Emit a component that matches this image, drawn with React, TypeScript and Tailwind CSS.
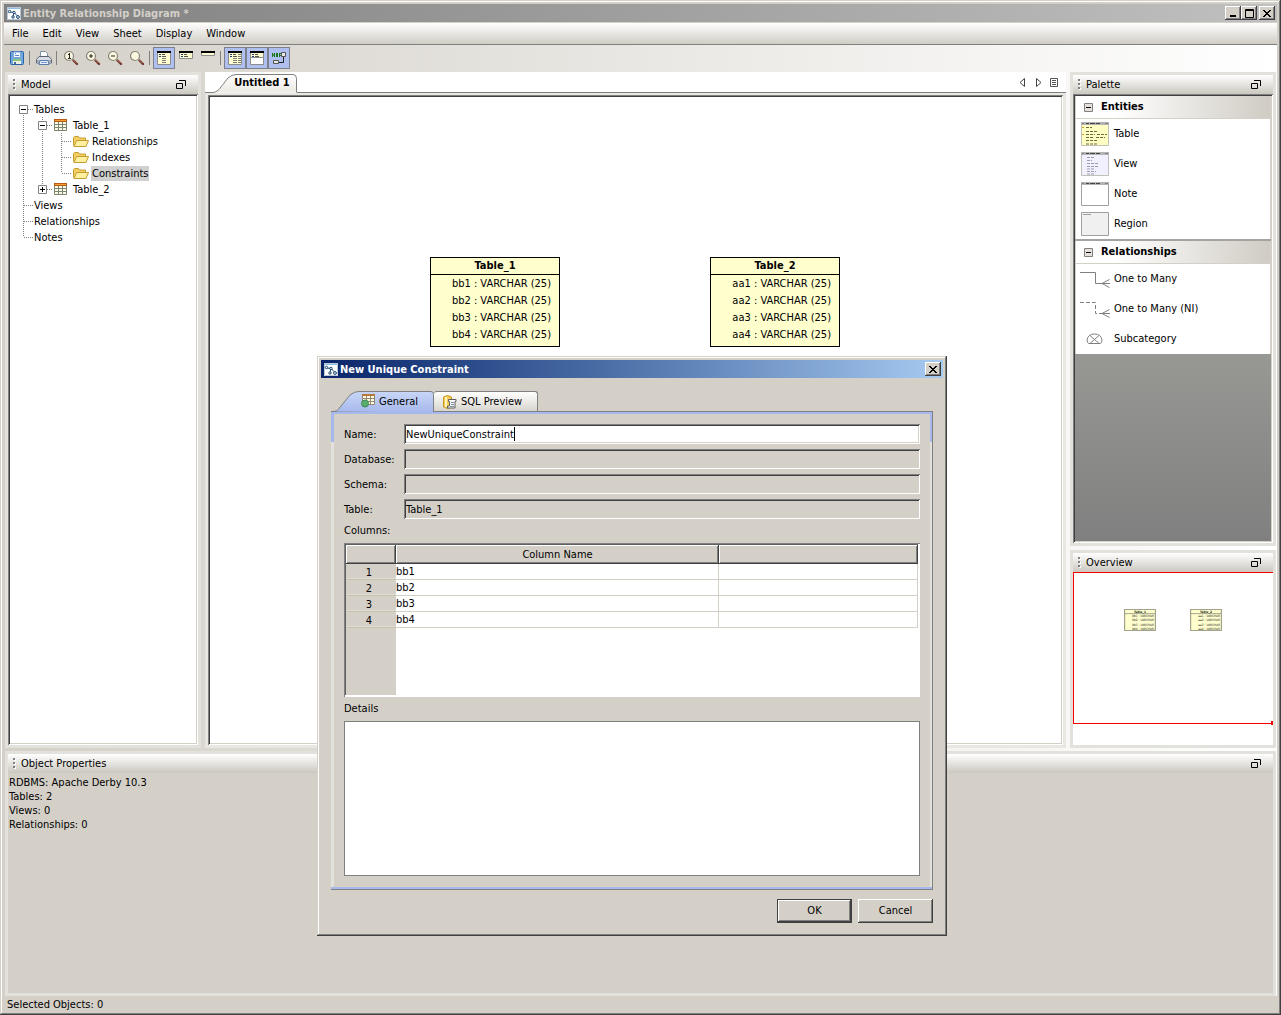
import { clsx } from 'clsx'
import type { ReactNode } from 'react'

type IconProps = { className?: string }

const AppIcon = () => (
  <svg width="14" height="13" viewBox="0 0 14 13" className="shrink-0" aria-hidden="true">
    <path fill="#fff" d="M0 0h14v13H0z" />
    <path fill="#8cc0e8" d="M0 0h14v2H0z" />
    <path fill="none" stroke="#b8c8d8" d="M.5.500h13v12H.5z" />
    <path stroke="#18487c" fill="none" d="M3 5l4 0.500M7 5.500L6 10M7 5.500l4 4" />
    <g fill="#fff" stroke="#12406c">
      <circle cx="2.500" cy="4.500" r="1.200" />
      <circle cx="7" cy="5.500" r="1.200" />
      <circle cx="6" cy="10" r="1.200" />
      <circle cx="11" cy="10" r="1.400" />
    </g>
  </svg>
)

const SaveIcon = () => (
  <svg width="16" height="16" viewBox="0 0 16 16" aria-hidden="true">
    <path fill="#6fa8e0" stroke="#2d62a8" d="M1.500 2.500q0-1 1-1h11q1 0 1 1v11q0 1-1 1h-11q-1 0-1-1z" />
    <path fill="#f8fbff" stroke="#7aa4d4" d="M4.500 2h7v5.500h-7z" />
    <path fill="#4d82c4" d="M6 3h1v1H6zM6 5h4v1H6z" />
    <path fill="#e8f4e0" d="M4 10h8v4H4z" />
    <path fill="#8cc47c" d="M4 9h8v2H4z" />
    <path fill="#4a6c94" d="M5 12h2v2H5z" />
  </svg>
)

const PrintIcon = () => (
  <svg width="16" height="16" viewBox="0 0 16 16" aria-hidden="true">
    <path fill="#fff" stroke="#8094a8" d="M4.500 7V1.500h5l2 2V7" />
    <path fill="#d8dce4" stroke="#5c6470" d="M3 6.500h10l2.500 3v3.500h-15V9.500z" />
    <path fill="#a4acb8" d="M1 10h14v3H1z" />
    <path fill="#e8f2ff" stroke="#5c7ca8" d="M4 10.500h8l1 4H3z" />
    <path fill="#7098d0" d="M5 12h6v1H5z" />
  </svg>
)

const ZoomIcon = ({ sign }: { sign?: 'one' | 'plus' | 'minus' }) => (
  <svg width="16" height="16" viewBox="0 0 16 16" aria-hidden="true">
    <path stroke="#70382c" strokeWidth="2.400" strokeLinecap="round" d="M10.500 10.500l3.500 3.500" />
    <path stroke="#b87868" d="M10 9.500l3.500 3.500" />
    <circle cx="6" cy="6" r="4.500" fill="#fbf6dc" stroke="#84847c" strokeWidth="1.200" />
    {sign === 'one' && <path fill="#222" d="M6 3h1v5H6V5H5V4h1zM5 8h3v1H5z" />}
    {sign === 'plus' && <path fill="#222" d="M5.500 4h1v1.500H8v1H6.500V8h-1V6.500H4v-1h1.500z" />}
    {sign === 'minus' && <path fill="#222" d="M4 5.500h4v1H4z" />}
  </svg>
)

/* Entity display modes of the diagram */
const EntityIcon = ({ mode }: { mode: 'full' | 'keys' | 'title' | 'types' | 'split' }) => {
  const height = { full: 13, keys: 7, title: 4, types: 13, split: 13 }[mode]
  return (
    <svg width="16" height="16" viewBox="0 0 16 16" aria-hidden="true">
      <path fill="#fffbd0" stroke="#8c8c8c" d={`M1.500 1.500h13v${height}h-13z`} />
      <path fill="#000" d="M1 1h14v2H1z" />
      {mode === 'split' && <path fill="#fff" stroke="#8c8c8c" d="M1.500 7.500h13v7h-13z" />}
      {mode !== 'title' && (
        <>
          <path stroke="#1c3c80" d="M3 4.500h2M3 6.500h2" />
          <path stroke="#55554c" d="M6 4.500h3M6 6.500h4" />
        </>
      )}
      {(mode === 'full' || mode === 'types') && (
        <path stroke="#7c7c70" d="M6 8.500h4M6 10.500h4M6 12.500h4" />
      )}
      {mode === 'types' && (
        <path stroke="#7c7c70" d="M11 4.500h3M11 6.500h3M11 8.500h3M11 10.500h3M11 12.500h3" />
      )}
    </svg>
  )
}

const RelationNameIcon = () => (
  <svg width="16" height="16" viewBox="0 0 16 16" aria-hidden="true">
    <path stroke="#222" fill="none" d="M6 12.500h6.500V6" />
    <path fill="#e8e8e8" stroke="#555" d="M10.500 2.500h4v4h-4zM2.500 10.500h5v3h-5z" />
    <path
      stroke="#187818"
      fill="none"
      d="M1.500 7V3M1.500 3.500l2 3M3.500 7V3M5.500 7V4M5 3.500h2M6.500 4v3M5 5.500h2M8.500 7V3M8.500 3.500h1.500M8.500 5.500h1.500"
    />
  </svg>
)

const FloatIcon = () => (
  <svg width="10" height="9" viewBox="0 0 10 9" aria-hidden="true">
    <path fill="none" stroke="#000" d="M3 .5h6.500V6M.5 3.500h6v5h-6z" />
  </svg>
)

const GripIcon = () => (
  <svg width="4" height="12" viewBox="0 0 4 12" aria-hidden="true">
    <path fill="#fff" d="M1 1h2v2H1zM1 5h2v2H1zM1 9h2v2H1z" />
    <path fill="#808080" d="M0 0h2v2H0zM0 4h2v2H0zM0 8h2v2H0z" />
  </svg>
)

const TableIcon = () => (
  <svg width="13" height="12" viewBox="0 0 13 12" className="shrink-0" aria-hidden="true">
    <path fill="#fbf8e4" d="M0 2h13v10H0z" />
    <path fill="#b85a18" d="M0 0h13v3H0z" />
    <path fill="#f0a030" d="M1 1h11v1H1z" />
    <path fill="none" stroke="#7c8474" d="M.5 3v8.500h12V3M4.500 3v8M8.500 3v8M1 5.500h11M1 8.500h11" />
  </svg>
)

const FolderIcon = () => (
  <svg width="16" height="11" viewBox="0 0 16 11" className="shrink-0" aria-hidden="true">
    <path fill="#f4d060" stroke="#c49c30" d="M.5 9.500V1.500l1-1h4l1 1.500h6v2.500" />
    <path fill="#fdf0a0" stroke="#c49c30" d="M1 10.500l2.500-6h12l-2.500 6z" />
  </svg>
)

const CloseGlyph = () => (
  <svg width="8" height="7" viewBox="0 0 8 7" aria-hidden="true">
    <path
      fill="#000"
      d="M0 0h2v1h1v1h2V1h1V0h2v1H7v1H6v1H5v1h1v1h1v1h1v1H6V6H5V5H3v1H2v1H0V6h1V5h1V4h1V3H2V2H1V1H0z"
    />
  </svg>
)

const raised =
  'bg-[#d4d0c8] shadow-[inset_-1px_-1px_#404040,inset_1px_1px_#fff,inset_-2px_-2px_#808080]'
const sunken =
  'shadow-[inset_1px_1px_#808080,inset_-1px_-1px_#fff,inset_2px_2px_#404040,inset_-2px_-2px_#d4d0c8]'

const CaptionButton = ({ label, children }: { label: string; children: ReactNode }) => (
  <button
    type="button"
    aria-label={label}
    className={clsx('flex h-[14px] w-4 items-center justify-center', raised)}
  >
    {children}
  </button>
)

const PanelHeader = ({ title }: { title: string }) => (
  <header className="flex h-[19px] shrink-0 items-center bg-linear-to-b from-white to-[#cbc8c0] pr-3 pl-[5px]">
    <GripIcon />
    <h2 className="ml-1 flex-1">{title}</h2>
    <button type="button" aria-label={`Float ${title}`}>
      <FloatIcon />
    </button>
  </header>
)

const Panel = ({
  title,
  className,
  children,
}: {
  title: string
  className?: string
  children: ReactNode
}) => (
  <section className={clsx('flex flex-col border-3 border-[#e2e1db]', className)}>
    <PanelHeader title={title} />
    {children}
  </section>
)

const menus = ['File', 'Edit', 'View', 'Sheet', 'Display', 'Window']

const toolGroups: { label: string; icon: ReactNode; pressed?: boolean }[][] = [
  [{ label: 'Save', icon: <SaveIcon /> }],
  [{ label: 'Print', icon: <PrintIcon /> }],
  [
    { label: 'Actual size', icon: <ZoomIcon sign="one" /> },
    { label: 'Zoom in', icon: <ZoomIcon sign="plus" /> },
    { label: 'Zoom out', icon: <ZoomIcon sign="minus" /> },
    { label: 'Zoom', icon: <ZoomIcon /> },
  ],
  [
    { label: 'Show all columns', icon: <EntityIcon mode="full" />, pressed: true },
    { label: 'Show keys', icon: <EntityIcon mode="keys" /> },
    { label: 'Show names', icon: <EntityIcon mode="title" /> },
  ],
  [
    { label: 'Show data types', icon: <EntityIcon mode="types" />, pressed: true },
    { label: 'Show key section', icon: <EntityIcon mode="split" />, pressed: true },
    { label: 'Show relationship names', icon: <RelationNameIcon />, pressed: true },
  ],
]

const Toolbar = () => (
  <div role="toolbar" className="flex h-[27px] shrink-0 items-start pt-[2px] pl-[2px]">
    {toolGroups.map((group, i) => (
      <div key={i} className="flex items-center">
        {i > 0 && <span className="mr-[3px] ml-px h-[14px] w-px bg-[#808080]" />}
        {group.map((tool) => (
          <button
            key={tool.label}
            type="button"
            aria-label={tool.label}
            aria-pressed={tool.pressed}
            className={clsx(
              'flex size-[22px] items-center justify-center border',
              tool.pressed ? 'border-[#7c7f8c] bg-[#afc0f0]' : 'border-transparent',
            )}
          >
            {tool.icon}
          </button>
        ))}
      </div>
    ))}
  </div>
)

type Guide = 'line' | 'tee' | 'end' | 'first-open' | 'open' | 'closed-end'

/* Dotted connector cell of the tree, one per nesting level */
const TreeGuide = ({ kind }: { kind: Guide }) => {
  const down = kind !== 'end' && kind !== 'closed-end'
  const up = kind !== 'first-open'
  const across = kind !== 'line'
  const box = kind === 'first-open' || kind === 'open' || kind === 'closed-end'
  return (
    <svg width="19" height="16" viewBox="0 0 19 16" className="shrink-0" aria-hidden="true">
      <g stroke="#808080" strokeDasharray="1 1">
        {up && <path d="M9.500 0v8" />}
        {down && <path d="M9.500 8v8" />}
        {across && <path d="M10 8.500h9" />}
      </g>
      {box && <path fill="#fff" stroke="#808080" d="M5.500 4.500h8v8h-8z" />}
      {box && <path stroke="#000" d="M7 8.500h5" />}
      {kind === 'closed-end' && <path stroke="#000" d="M9.500 6v5" />}
    </svg>
  )
}

const treeRows: {
  label: string
  guides: Guide[]
  icon?: 'table' | 'folder'
  selected?: boolean
}[] = [
  { label: 'Tables', guides: ['first-open'] },
  { label: 'Table_1', guides: ['line', 'open'], icon: 'table' },
  { label: 'Relationships', guides: ['line', 'line', 'tee'], icon: 'folder' },
  { label: 'Indexes', guides: ['line', 'line', 'tee'], icon: 'folder' },
  { label: 'Constraints', guides: ['line', 'line', 'end'], icon: 'folder', selected: true },
  { label: 'Table_2', guides: ['line', 'closed-end'], icon: 'table' },
  { label: 'Views', guides: ['tee'] },
  { label: 'Relationships', guides: ['tee'] },
  { label: 'Notes', guides: ['end'] },
]

const ModelTree = () => (
  <ul role="tree" className={clsx('flex-1 bg-white pt-[7px] pl-[6px]', sunken)}>
    {treeRows.map((row, i) => (
      <li
        key={i}
        role="treeitem"
        aria-level={row.guides.length}
        aria-selected={!!row.selected}
        className="flex h-4 items-center"
      >
        {row.guides.map((kind, level) => (
          <TreeGuide key={level} kind={kind} />
        ))}
        {row.icon && (
          <span className="flex w-5 shrink-0 pl-[2px]">
            {row.icon === 'table' ? <TableIcon /> : <FolderIcon />}
          </span>
        )}
        <span className={clsx('px-px leading-[15px]', row.selected && 'bg-[#d0d0d0]')}>
          {row.label}
        </span>
      </li>
    ))}
  </ul>
)

const entities = [
  { name: 'Table_1', prefix: 'bb', place: 'left-[222px] top-[162px]' },
  { name: 'Table_2', prefix: 'aa', place: 'left-[502px] top-[162px]' },
]

const Entity = ({ name, prefix, place }: (typeof entities)[number]) => (
  <div className={clsx('absolute h-[90px] w-[130px] border border-black bg-[#ffffce]', place)}>
    <h3 className="border-b border-black text-center leading-4 font-bold">{name}</h3>
    <ul className="pr-2 text-right leading-[17px]">
      {[1, 2, 3, 4].map((n) => (
        <li key={n}>{`${prefix}${n} : VARCHAR (25)`}</li>
      ))}
    </ul>
  </div>
)

const Sheet = () => (
  <main className="flex min-w-0 flex-1 flex-col">
    <div className="flex h-[21px] shrink-0 items-stretch bg-white">
      <span className="w-2 border-b border-[#808080]" />
      <button type="button" role="tab" aria-selected="true" className="relative w-[84px] pt-px font-bold">
        <svg width="84" height="21" viewBox="0 0 84 21" className="absolute inset-0" aria-hidden="true">
          <defs>
            <linearGradient id="sheetTab" x2="0" y2="1">
              <stop offset="0" stopColor="#fff" />
              <stop offset="1" stopColor="#ece9e3" />
            </linearGradient>
          </defs>
          <path
            fill="url(#sheetTab)"
            stroke="#808080"
            d="M0 20.500q3 0 6-3L15 6q4-3.500 8-3.500h57q3.500 0 3.500 4v14"
          />
        </svg>
        <span className="relative pl-[14px]">Untitled 1</span>
      </button>
      <div className="flex flex-1 items-center justify-end gap-2 border-b border-[#808080] pr-2">
        <div className="flex items-center gap-[11px]">
          <button type="button" aria-label="Previous sheet">
            <svg width="6" height="9" viewBox="0 0 6 9" aria-hidden="true">
              <path fill="none" stroke="#444" d="M5.500.500v8L1 4.500z" />
            </svg>
          </button>
          <button type="button" aria-label="Next sheet">
            <svg width="6" height="9" viewBox="0 0 6 9" aria-hidden="true">
              <path fill="none" stroke="#444" d="M.5.500v8L5 4.500z" />
            </svg>
          </button>
        </div>
        <button type="button" aria-label="Sheet list">
          <svg width="8" height="9" viewBox="0 0 8 9" aria-hidden="true">
            <path fill="none" stroke="#555" d="M.5.500h7v8h-7zM2 2.500h4M2 4.500h4M2 6.500h4" />
          </svg>
        </button>
      </div>
    </div>
    <div className="flex flex-1 border-x-3 border-t-2 border-b-3 border-[#e8e7e1]">
      <div className={clsx('relative flex-1 bg-white', sunken)}>
        {entities.map((entity) => (
          <Entity key={entity.name} {...entity} />
        ))}
      </div>
    </div>
  </main>
)

const ThumbIcon = ({ kind }: { kind: 'table' | 'view' | 'note' | 'region' }) => {
  const fill = { table: '#ffffc4', view: '#f0f0ff', note: '#fff', region: '#f0f0f0' }[kind]
  return (
    <svg width="30" height="24" viewBox="0 0 30 24" aria-hidden="true">
      <path fill={fill} stroke={kind === 'table' || kind === 'view' ? '#c0c0b8' : '#a0a0a0'} d="M1.500.500h27v23h-27z" />
      {kind !== 'region' && (
        <>
          <path fill="#b4b4b4" d="M1 0h28v3H1z" />
          <path stroke="#444" strokeDasharray="3 1 2 0" d="M6 1.500h14" />
          <path stroke="#808080" d="M2 1.500h2M25 1.500h3" />
        </>
      )}
      {kind === 'region' && <path stroke="#a0a0a0" d="M3 2.500h8" />}
      {kind === 'table' && (
        <>
          <path stroke="#e0982c" d="M2 5.500h2M2 12.500h2" />
          <path
            stroke="#6c6c44"
            strokeDasharray="3 1"
            d="M6 5.500h6M6 9.500h12M6 12.500h9M17 12.500h10M6 15.500h8M16 15.500h9M6 18.500h11M6 22h11"
          />
        </>
      )}
      {kind === 'view' && (
        <path
          stroke="#9c9cb0"
          strokeDasharray="3 1"
          d="M7 5.500h8M7 8.500h5M7 11.500h11M7 14.500h11M7 17h8M7 19.500h9M7 22h8"
        />
      )}
    </svg>
  )
}

const LinkIcon = ({ dashed }: { dashed?: boolean }) => (
  <svg width="30" height="18" viewBox="0 0 30 18" aria-hidden="true">
    <path
      fill="none"
      stroke="#808080"
      strokeDasharray={dashed ? '4 2' : undefined}
      d="M0 2.500h15.500v11H22"
    />
    <path fill="none" stroke="#808080" d="M21 13.500h9M22 13.500l7.500-4M22 13.500l7.500 4" />
  </svg>
)

const SubcategoryIcon = () => (
  <svg width="30" height="12" viewBox="0 0 30 12" aria-hidden="true">
    <path
      fill="none"
      stroke="#808080"
      d="M8.500 10.500q-1.500-1-1.500-3.500 1-6 7.500-6t7.500 6q0 2.500-1.500 3.500zM10 2.500l9 8M19 2.500l-9 8"
    />
  </svg>
)

const paletteGroups = [
  {
    title: 'Entities',
    items: [
      { label: 'Table', icon: <ThumbIcon kind="table" /> },
      { label: 'View', icon: <ThumbIcon kind="view" /> },
      { label: 'Note', icon: <ThumbIcon kind="note" /> },
      { label: 'Region', icon: <ThumbIcon kind="region" /> },
    ],
  },
  {
    title: 'Relationships',
    items: [
      { label: 'One to Many', icon: <LinkIcon /> },
      { label: 'One to Many (NI)', icon: <LinkIcon dashed /> },
      { label: 'Subcategory', icon: <SubcategoryIcon /> },
    ],
  },
]

const Palette = () => (
  <div className={clsx('flex-1 p-[2px]', sunken)}>
    <div className="flex h-full flex-col gap-[2px] bg-linear-to-b from-[#b4b0aa] via-[#9c9c98] to-[#808080]">
      {paletteGroups.map((group) => (
        <section key={group.title} className="border-x border-[#d4d0c8] bg-white">
          <h3 className="flex h-[23px] items-center border-b border-[#d4d0c8] bg-linear-to-r from-white from-20% to-[#d0ccc4] font-bold">
            <button type="button" aria-label={`Collapse ${group.title}`} className="mx-2">
              <svg width="9" height="9" viewBox="0 0 9 9" aria-hidden="true">
                <path fill="#e4e1da" stroke="#808080" d="M.5.500h8v8h-8z" />
                <path stroke="#000" d="M2 4.500h5" />
              </svg>
            </button>
            {group.title}
          </h3>
          {group.items.map((item) => (
            <button
              key={item.label}
              type="button"
              className="flex h-[30px] w-full items-center gap-1 pb-px pl-1 text-left"
            >
              <span className="flex w-[30px] justify-center">{item.icon}</span>
              {item.label}
            </button>
          ))}
        </section>
      ))}
    </div>
  </div>
)

const MiniEntity = ({ name, prefix, className }: { name: string; prefix: string } & IconProps) => (
  <svg
    width="32"
    height="22"
    viewBox="0 0 130 90"
    className={className}
    role="img"
    aria-label={name}
  >
    <path fill="#ffffce" stroke="#a4a48c" strokeWidth="5" d="M2 2h126v86H2z" />
    <path stroke="#a4a48c" strokeWidth="4" d="M2 19h126" />
    <g fontSize="13" fill="#222">
      <text x="65" y="15" textAnchor="middle" fontWeight="bold">
        {name}
      </text>
      {[1, 2, 3, 4].map((n) => (
        <text key={n} x="122" y={17 + n * 17} textAnchor="end">
          {`${prefix}${n} : VARCHAR`}
        </text>
      ))}
    </g>
  </svg>
)

const Overview = () => (
  <div className="h-[173px] shrink-0 bg-white">
    <div className="relative h-[152px] border-y border-l border-[#ff0000]">
      <MiniEntity name="Table_1" prefix="bb" className="absolute top-9 left-[50px]" />
      <MiniEntity name="Table_2" prefix="aa" className="absolute top-9 left-[116px]" />
      <span className="absolute right-0 -bottom-[2px] h-1 w-[2px] bg-[#ff0000]" />
    </div>
  </div>
)

const fields = [
  { id: 'name', label: 'Name:', value: 'NewUniqueConstraint', editable: true },
  { id: 'database', label: 'Database:', value: '' },
  { id: 'schema', label: 'Schema:', value: '' },
  { id: 'table', label: 'Table:', value: 'Table_1' },
]

const GeneralTabIcon = () => (
  <svg width="14" height="14" viewBox="0 0 14 14" aria-hidden="true">
    <path
      fill="#fffbe8"
      stroke="#94886c"
      d="M1.500 1.500h12v9h-12zM5.500 1.500v9M9.500 1.500v9M1.500 4.500h12M1.500 7.500h12"
    />
    <path fill="#b87838" d="M1 0h13v2H1z" />
    <circle cx="4" cy="9.500" r="3.500" fill="#5cac70" stroke="#3c8c54" />
  </svg>
)

const SqlTabIcon = () => (
  <svg width="14" height="14" viewBox="0 0 14 14" aria-hidden="true">
    <path fill="#f8cc50" stroke="#c89828" d="M.5 2q4-3 8 0v10q-4 3-8 0z" />
    <path fill="#fff4c0" d="M2 2h2v10H2z" />
    <path fill="#f8f8f8" stroke="#606060" d="M5.500 4.500h7.500v2h-1v6.500H4.500v-2h2V6.500h-1z" />
    <path stroke="#7c8ca4" d="M8 7.500h3M8 9.500h3M7 11.500h4" />
  </svg>
)

const ColumnsTable = () => (
  <div className="h-[154px] bg-linear-to-r from-[#d4d0c8] from-[52px] to-white to-[52px] p-[2px] shadow-[inset_1px_1px_#808080,inset_-2px_-2px_#fff,inset_2px_2px_#606060]">
    <table className="w-full table-fixed border-separate border-spacing-0">
      <thead>
        <tr className="h-[19px] leading-[17px]">
          <th aria-label="Row" className={clsx('w-[50px] p-0', raised)} />
          <th className={clsx('p-0 font-normal', raised)}>Column Name</th>
          <th aria-label="Unused" className={clsx('w-[199px] p-0', raised)} />
        </tr>
      </thead>
      <tbody>
        {[1, 2, 3, 4].map((n) => (
          <tr key={n} className="h-4 leading-[15px]">
            <th
              scope="row"
              className="bg-[#d4d0c8] p-0 pr-1 font-normal shadow-[inset_0_-1px_#c6c2b4,inset_0_-2px_#e0dccc]"
            >
              {n}
            </th>
            <td className="border-r border-b border-[#d4d0c8] p-0">bb{n}</td>
            <td className="border-r border-b border-[#d4d0c8] p-0" />
          </tr>
        ))}
      </tbody>
    </table>
  </div>
)

const ConstraintDialog = () => (
  <div
    role="dialog"
    aria-label="New Unique Constraint"
    className="absolute top-[356px] left-[317px] flex w-[630px] flex-col bg-[#d4d0c8] p-1 pb-[13px] shadow-[inset_-1px_-1px_#404040,inset_1px_1px_#d4d0c8,inset_-2px_-2px_#808080,inset_2px_2px_#fff]"
  >
    <div className="flex h-[18px] items-center gap-[2px] bg-linear-to-r from-[#0a246a] to-[#a6caf0] pr-[2px] pl-[3px] font-bold text-white">
      <AppIcon />
      <h2 className="flex-1 pt-px">New Unique Constraint</h2>
      <CaptionButton label="Close">
        <CloseGlyph />
      </CaptionButton>
    </div>

    <div className="mx-[10px] mt-[13px] flex flex-col">
      <div role="tablist" className="flex h-5">
        <button type="button" role="tab" aria-selected="true" className="relative w-[103px]">
          <svg width="103" height="21" viewBox="0 0 103 21" className="absolute top-0 left-0" aria-hidden="true">
            <defs>
              <linearGradient id="generalTab" x2="0" y2="1">
                <stop offset="0" stopColor="#c8d6f8" />
                <stop offset="1" stopColor="#a6b8ec" />
              </linearGradient>
            </defs>
            <path
              fill="url(#generalTab)"
              stroke="#808080"
              d="M0 20.500h3q3 0 5-3L19 4q4-3.500 9-3.500h72q2.500 0 2.500 3v18"
            />
          </svg>
          <span className="relative flex items-center gap-1 pl-[30px]">
            <GeneralTabIcon />
            <span className="pt-px">General</span>
          </span>
        </button>
        <button
          type="button"
          role="tab"
          aria-selected="false"
          className="flex w-[104px] items-center gap-1 rounded-t-[3px] border border-b-0 border-l-0 border-[#808080] bg-linear-to-b from-white to-[#d8d5ce] pl-[9px]"
        >
          <SqlTabIcon />
          SQL Preview
        </button>
      </div>
      <div className="border-y border-r border-[#808080]">
        <div className="border-y-2 border-[#a6b8ec] bg-linear-to-b from-[#a6b8ec] from-[28px] to-[#e2e1db] to-[28px] pr-[2px] pl-[3px]">
          <form className="flex flex-col bg-[#d4d0c8] px-[10px] pt-[10px] pb-[11px]">
            <div className="flex flex-col gap-[5px]">
              {fields.map((field) => (
                <div key={field.id} className="flex h-5 items-center">
                  <label htmlFor={field.id} className="w-[60px] pt-px">
                    {field.label}
                  </label>
                  <div className="relative flex flex-1">
                    <input
                      id={field.id}
                      type="text"
                      defaultValue={field.value}
                      readOnly={!field.editable}
                      className={clsx(
                        'h-5 w-full px-[2px] outline-none',
                        field.editable
                          ? clsx('bg-white', sunken)
                          : 'bg-[#d4d0c8] shadow-[inset_1px_1px_#808080,inset_-1px_-1px_#fff,inset_2px_2px_#404040]',
                      )}
                    />
                    {field.editable && (
                      <span className="absolute top-[3px] left-[110px] h-[14px] w-px bg-black" />
                    )}
                  </div>
                </div>
              ))}
            </div>
            <p className="mt-[5px] mb-[5px] leading-[14px]">Columns:</p>
            <ColumnsTable />
            <label htmlFor="details" className="mt-[5px] mb-[5px] leading-[14px]">
              Details
            </label>
            <textarea
              id="details"
              className="h-[155px] resize-none border border-[#808080] bg-white outline-none"
            />
          </form>
        </div>
      </div>
      <div className="mt-[9px] flex justify-end gap-[6px]">
        <button
          type="submit"
          className="h-6 w-[75px] border border-[#404040] bg-[#d4d0c8] shadow-[inset_-1px_-1px_#404040,inset_1px_1px_#fff,inset_-2px_-2px_#808080]"
        >
          OK
        </button>
        <button type="button" className={clsx('h-6 w-[75px]', raised)}>
          Cancel
        </button>
      </div>
    </div>
  </div>
)

const properties = ['RDBMS: Apache Derby 10.3', 'Tables: 2', 'Views: 0', 'Relationships: 0']

const App = () => (
  <div className="relative flex h-screen min-h-[960px] flex-col bg-[#d4d0c8] p-1 pb-[3px] font-['DejaVu_Sans_Condensed','DejaVu_Sans',sans-serif] text-[11px] leading-[14px] text-black shadow-[inset_-1px_-1px_#404040,inset_1px_1px_#d4d0c8,inset_-2px_-2px_#808080,inset_2px_2px_#fff]">
    <div className="flex h-[18px] shrink-0 items-center gap-[2px] bg-linear-to-r from-[#808080] to-[#c0c0c0] pr-[2px] pl-[3px] font-bold text-[#d4d0c8]">
      <AppIcon />
      <h1 className="flex-1 pt-px">Entity Relationship Diagram *</h1>
      <div className="flex">
        <CaptionButton label="Minimize">
          <svg width="8" height="7" viewBox="0 0 8 7" aria-hidden="true">
            <path fill="#000" d="M1 5h6v2H1z" />
          </svg>
        </CaptionButton>
        <CaptionButton label="Maximize">
          <svg width="9" height="9" viewBox="0 0 9 9" aria-hidden="true">
            <path fill="none" stroke="#000" d="M.5.500h8v8h-8zM0 1.500h9" />
          </svg>
        </CaptionButton>
      </div>
      <CaptionButton label="Close">
        <CloseGlyph />
      </CaptionButton>
    </div>

    <nav className="mt-px flex h-[22px] shrink-0 items-center gap-[14px] border-b border-[#808080] bg-linear-to-b from-white to-[#d0cdc5] pl-2">
      {menus.map((menu) => (
        <button key={menu} type="button">
          {menu}
        </button>
      ))}
    </nav>

    <div className="flex flex-1 flex-col bg-linear-to-r from-[#d4d0c8] to-white">
      <Toolbar />
      <div className="flex flex-1 gap-1 pr-px pl-px">
        <Panel title="Model" className="w-[196px]">
          <ModelTree />
        </Panel>
        <Sheet />
        <div className="flex w-[206px] flex-col gap-1">
          <Panel title="Palette" className="flex-1">
            <Palette />
          </Panel>
          <Panel title="Overview">
            <Overview />
          </Panel>
        </div>
      </div>
      <Panel title="Object Properties" className="mx-px mt-[3px] h-[245px]">
        <div className="flex-1 bg-[#d4d0c8] px-px pt-[3px]">
          {properties.map((line) => (
            <p key={line}>{line}</p>
          ))}
        </div>
      </Panel>
    </div>
    <footer className="h-4 shrink-0 pt-[2px] pl-[3px]">Selected Objects: 0</footer>
    <ConstraintDialog />
  </div>
)

export default App
